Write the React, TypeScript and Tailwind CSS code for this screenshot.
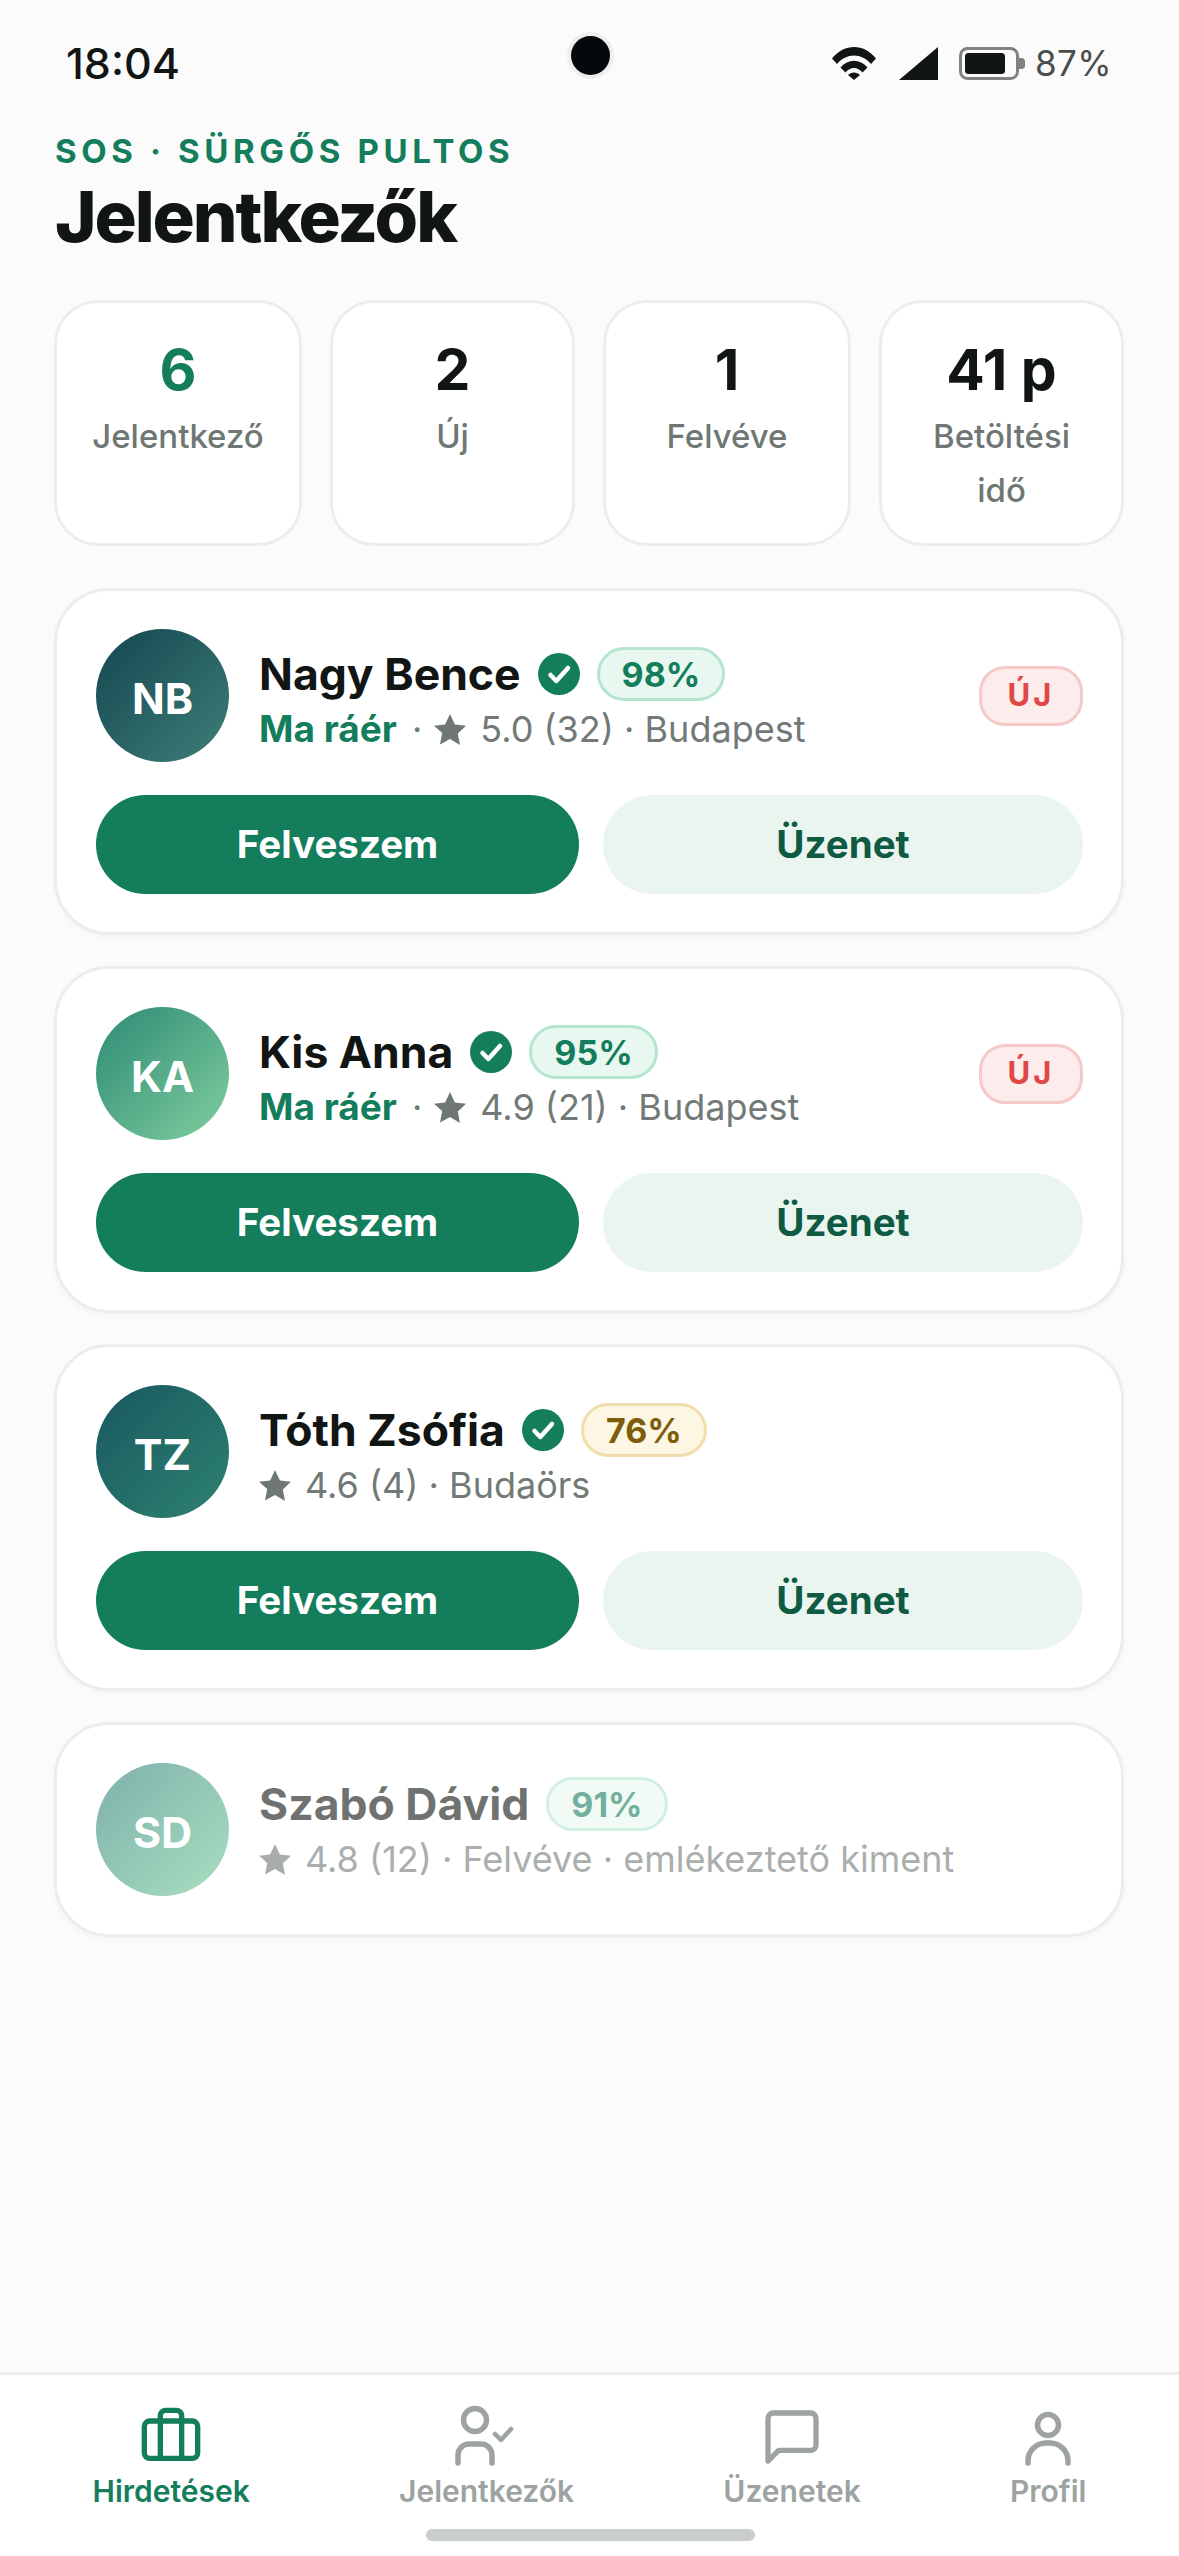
const font = { fontFamily: "Inter, 'Noto Sans', sans-serif" };

type Applicant = {
  initials: string;
  name: string;
  verified: boolean;
  match: string;
  matchClass: string;
  avatarClass: string;
  available: boolean;
  rating: string;
  rest: string;
  isNew: boolean;
  hired?: boolean;
};

const greenMatch = "border-[#b5e5cf] bg-[#e8f7ef] text-[#137d5c]";

const applicants: Applicant[] = [
  {
    initials: "NB",
    name: "Nagy Bence",
    verified: true,
    match: "98%",
    matchClass: greenMatch,
    avatarClass: "bg-linear-to-br from-[#134650] to-[#3f7f78]",
    available: true,
    rating: "5.0 (32)",
    rest: "Budapest",
    isNew: true,
  },
  {
    initials: "KA",
    name: "Kis Anna",
    verified: true,
    match: "95%",
    matchClass: greenMatch,
    avatarClass: "bg-linear-to-br from-[#2a8a74] to-[#7fcf9f]",
    available: true,
    rating: "4.9 (21)",
    rest: "Budapest",
    isNew: true,
  },
  {
    initials: "TZ",
    name: "Tóth Zsófia",
    verified: true,
    match: "76%",
    matchClass: "border-[#f0deaa] bg-[#fdf6e3] text-[#7d5c0c]",
    avatarClass: "bg-linear-to-br from-[#1a5860] to-[#2d8270]",
    available: false,
    rating: "4.6 (4)",
    rest: "Budaörs",
    isNew: false,
  },
  {
    initials: "SD",
    name: "Szabó Dávid",
    verified: false,
    match: "91%",
    matchClass: greenMatch,
    avatarClass: "bg-linear-to-br from-[#2a7d74] to-[#6fcb97]",
    available: false,
    rating: "4.8 (12)",
    rest: "Felvéve · emlékeztető kiment",
    isNew: false,
    hired: true,
  },
];

const stats = [
  { value: "6", label: "Jelentkező", green: true },
  { value: "2", label: "Új" },
  { value: "1", label: "Felvéve" },
  { value: "41 p", label: "Betöltési idő" },
];

function StatusBar() {
  return (
    <div className="relative flex h-[132px] shrink-0 items-center justify-between pb-[6px] pl-[66px] pr-[67px]">
      <span className="text-[43px] font-medium text-[#111514]">18:04</span>
      <div className="absolute left-[567px] top-[32px] flex h-[47px] w-[47px] items-center justify-center rounded-full bg-[#eeeeef]">
        <div className="h-[39px] w-[39px] rounded-full bg-[#05080d]" />
      </div>
      <div className="flex items-center">
        <svg width="44" height="33" viewBox="0 0 44 33" fill="#111514">
          <path d="M0 11.5C12.5 -3.8 31.5 -3.8 44 11.5L39 17C29.5 5.5 14.5 5.5 5 17Z" />
          <path d="M8.5 20.5C16 11.5 28 11.5 35.5 20.5L30.5 25.5C25.5 19.5 18.5 19.5 13.5 25.5Z" />
          <path d="M16 28C19 24.5 25 24.5 28 28L22 33Z" />
        </svg>
        <svg className="ml-[23px]" width="39" height="33" viewBox="0 0 39 33" fill="#111514">
          <path d="M39 0V33H0Z" />
        </svg>
        <svg className="ml-[21px]" width="66" height="33" viewBox="0 0 66 33">
          <rect x="1.5" y="1.5" width="57" height="30" rx="7" fill="none" stroke="#808382" strokeWidth="3" />
          <rect x="6" y="6" width="40" height="21" rx="3.5" fill="#111514" />
          <path d="M60 11h2.5a3.5 3.5 0 0 1 3.5 3.5v4a3.5 3.5 0 0 1-3.5 3.5H60Z" fill="#808382" />
        </svg>
        <span className="ml-[10px] text-[35px] font-normal tracking-[0.01em] text-[#4a4d4c]">87%</span>
      </div>
    </div>
  );
}

function StatCard({ value, label, green }: { value: string; label: string; green?: boolean }) {
  return (
    <div className="flex h-[246px] flex-col items-center rounded-[44px] border-[3px] border-[#eceeed] bg-white px-[28px] pt-[33px] text-center">
      <div className={`text-[57px] font-bold leading-[68px] ${green ? "text-[#137d5c]" : "text-[#111514]"}`}>
        {value}
      </div>
      <div className="mt-[5px] text-[33px] font-medium leading-[54px] text-[#6f7774]">{label}</div>
    </div>
  );
}

function VerifiedBadge() {
  return (
    <svg className="shrink-0" width="42" height="42" viewBox="0 0 42 42">
      <circle cx="21" cy="21" r="21" fill="#137d5c" />
      <path d="M12.5 22l5.8 6L30 15" fill="none" stroke="#fff" strokeWidth="4.5" strokeLinecap="round" strokeLinejoin="round" />
    </svg>
  );
}

function Star({ color }: { color: string }) {
  return (
    <svg className="shrink-0" width="32" height="31" viewBox="0 0 32 31" fill={color}>
      <path d="M16 0l4.9 10.4 11.1 1.4-8.2 7.7 2.2 11.5L16 25l-10 5.5 2.2-11.5L0 11.8l11.1-1.4Z" />
    </svg>
  );
}

function ApplicantCard({ applicant }: { applicant: Applicant }) {
  return (
    <div className="rounded-[55px] border-[3px] border-[#eceeed] bg-white py-[38px] pl-[39px] pr-[38px] shadow-[0_2px_6px_rgba(20,40,30,0.03)]">
      <div className={`flex items-center ${applicant.hired ? "opacity-60" : ""}`}>
        <div
          className={`flex h-[133px] w-[133px] shrink-0 items-center justify-center rounded-full pt-[5px] text-[43px] font-bold text-white ${applicant.avatarClass}`}
        >
          {applicant.initials}
        </div>
        <div className={`ml-[30px] min-w-0 flex-1 ${applicant.hired ? "pt-[2px]" : "pt-[10px]"}`}>
          <div className="flex h-[54px] items-center">
            <span className="text-[44.5px] font-bold leading-[54px] text-[#111514]">{applicant.name}</span>
            {applicant.verified && (
              <span className="ml-[17px]">
                <VerifiedBadge />
              </span>
            )}
            <span
              className={`ml-[17px] flex h-[54px] items-center rounded-full border-[3px] px-[22px] text-[34px] font-bold ${applicant.matchClass}`}
            >
              {applicant.match}
            </span>
          </div>
          <div className="mt-[3px] flex h-[50px] items-center text-[36px] text-[#727a77]">
            {applicant.available && (
              <>
                <span className="text-[37px] font-bold text-[#137d5c]">Ma ráér</span>
                <span className="ml-[15px] mr-[12px]">·</span>
              </>
            )}
            <Star color="#6f7774" />
            <span className="ml-[14px] whitespace-pre">
              {applicant.rating} · {applicant.rest}
            </span>
          </div>
        </div>
        {applicant.isNew && (
          <span className="flex h-[60px] w-[104px] shrink-0 items-center justify-center rounded-[26px] border-[3px] border-[#f6c9c9] bg-[#fdecec] text-[31px] font-bold tracking-[0.1em] text-[#e04848]">
            ÚJ
          </span>
        )}
      </div>
      {!applicant.hired && (
        <div className="mt-[33px] flex gap-[24px]">
          <button className="h-[99px] w-[483px] rounded-full bg-[#137d5c] text-[38.5px] font-bold text-white">
            Felveszem
          </button>
          <button className="h-[99px] flex-1 rounded-full bg-[#eaf5ef] text-[38.5px] font-bold text-[#0e5a42]">
            Üzenet
          </button>
        </div>
      )}
    </div>
  );
}

function BriefcaseIcon() {
  return (
    <svg width="64" height="64" viewBox="0 0 24 24" fill="none" stroke="#137d5c" strokeWidth="2" strokeLinecap="round" strokeLinejoin="round">
      <path d="M16 20V4a2 2 0 0 0-2-2h-4a2 2 0 0 0-2 2v16" />
      <rect x="2" y="6" width="20" height="14" rx="2" />
    </svg>
  );
}

function PersonCheckIcon() {
  return (
    <svg width="64" height="64" viewBox="0 0 64 64" fill="none" stroke="#9ca3a0" strokeWidth="5.5" strokeLinecap="round" strokeLinejoin="round">
      <circle cx="20" cy="15" r="11.5" />
      <path d="M3 58V50a11 11 0 0 1 11-11h12a11 11 0 0 1 11 11v8" />
      <path d="M40 29l6 6 10-11" strokeWidth="4.5" />
    </svg>
  );
}

function MessageIcon() {
  return (
    <svg width="64" height="64" viewBox="0 0 24 24" fill="none" stroke="#9ca3a0" strokeWidth="2" strokeLinecap="round" strokeLinejoin="round">
      <path d="M21 15a2 2 0 0 1-2 2H7l-4 4V5a2 2 0 0 1 2-2h14a2 2 0 0 1 2 2z" />
    </svg>
  );
}

function ProfileIcon() {
  return (
    <svg width="64" height="64" viewBox="0 0 64 64" fill="none" stroke="#9ca3a0" strokeWidth="5.5" strokeLinecap="round" strokeLinejoin="round">
      <circle cx="32" cy="20" r="10.5" />
      <path d="M12 58v-2a18 18 0 0 1 18-18h4a18 18 0 0 1 18 18v2" />
    </svg>
  );
}

const tabs = [
  { label: "Hirdetések", icon: <BriefcaseIcon />, active: true },
  { label: "Jelentkezők", icon: <PersonCheckIcon /> },
  { label: "Üzenetek", icon: <MessageIcon /> },
  { label: "Profil", icon: <ProfileIcon /> },
];

export default function App() {
  return (
    <div className="flex h-[2556px] w-[1179px] flex-col overflow-hidden bg-[#fbfbfb]" style={font}>
      <StatusBar />

      <header className="px-[55px]">
        <div className="text-[33px] font-bold leading-[38px] tracking-[0.14em] text-[#137d5c]">SOS · SÜRGŐS PULTOS</div>
        <h1 className="mt-[5px] text-[70.5px] font-extrabold leading-[84px] tracking-[-0.03em] text-[#111514]">
          Jelentkezők
        </h1>
      </header>

      <div className="mt-[41px] grid grid-cols-[248px_245px_248px_245px] gap-[28px] pl-[54px] pr-[55px]">
        {stats.map((stat) => (
          <StatCard key={stat.label} {...stat} />
        ))}
      </div>

      <div className="mt-[42px] flex flex-col gap-[31px] pl-[54px] pr-[55px]">
        {applicants.map((applicant) => (
          <ApplicantCard key={applicant.initials} applicant={applicant} />
        ))}
      </div>

      <nav className="relative mt-auto h-[184px] shrink-0 border-t-[3px] border-[#ebeceb] bg-white">
        <div className="flex justify-around px-[18px] pt-[30px]">
          {tabs.map((tab) => (
            <div key={tab.label} className="flex flex-col items-center">
              {tab.icon}
              <span
                className={`mt-[4px] text-[30px] font-semibold leading-[36px] ${
                  tab.active ? "text-[#137d5c]" : "text-[#9ca3a0]"
                }`}
              >
                {tab.label}
              </span>
            </div>
          ))}
        </div>
        <div className="absolute bottom-[15px] left-[426px] h-[12px] w-[329px] rounded-full bg-[#c9cdcb]" />
      </nav>
    </div>
  );
}
